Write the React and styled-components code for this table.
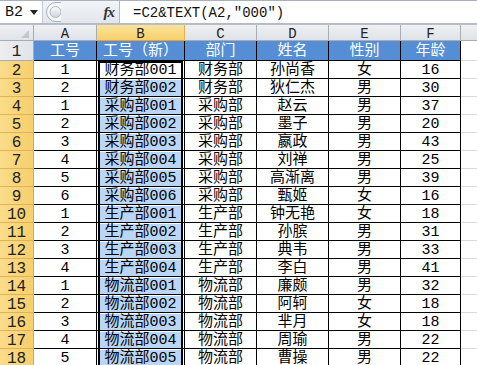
import React from "react";
import styled, { createGlobalStyle } from "styled-components";

const Global = createGlobalStyle`
  html, body { margin: 0; padding: 0; background: #fff; }
  body { font-family: "Liberation Mono", "Noto Sans CJK SC", monospace; }
  * { box-sizing: border-box; }
`;

const COLS = "34px 63px 88px 72px 72px 72px 60px 1fr";

const Page = styled.div`
  width: 477px;
  height: 365px;
  overflow: hidden;
  background: #fff;
  display: flex;
  flex-direction: column;
`;

const FormulaBar = styled.div`
  height: 24px;
  display: flex;
  border-top: 1px solid #aab1ba;
  border-bottom: 1px solid #b4bbc4;
  background: linear-gradient(#f2f4f7, #e2e6ec);
`;

const NameBox = styled.div`
  width: 43px;
  background: #fff;
  display: flex;
  align-items: center;
  justify-content: space-between;
  padding: 1px 4px 0 5px;
  font-size: 15px;
  color: #111;
  border-right: 1px solid #c4cad2;
`;

const Handle = styled.div`
  width: 76px;
  display: flex;
  align-items: center;
  justify-content: space-between;
  padding: 0 5px 0 2px;
`;

const Fx = styled.span`
  font-family: "Liberation Serif", serif;
  font-style: italic;
  font-weight: bold;
  font-size: 15px;
  color: #333;
  letter-spacing: -1px;
`;

const FormulaInput = styled.div`
  flex: 1;
  background: #fff;
  border-left: 1px solid #b4bbc4;
  display: flex;
  align-items: center;
  padding: 1px 0 0 13px;
  font-size: 14px;
  color: #111;
  white-space: nowrap;
`;

const Gap = styled.div`
  height: 4px;
  background: #e6e8eb;
  border-bottom: 1px solid #b9bec5;
`;

const Row = styled.div`
  display: grid;
  grid-template-columns: ${COLS};
  height: ${(p) => p.$h}px;
  flex-shrink: 0;
`;

const Center = styled.div`
  display: flex;
  align-items: center;
  justify-content: center;
  white-space: nowrap;
  overflow: hidden;
  line-height: 1;
`;

const Corner = styled(Center)`
  position: relative;
  background: linear-gradient(#eef0f3, #e1e4e8);
  border-right: 1px solid #a7adb5;
  border-bottom: 1px solid #a7adb5;
`;

const CornerMark = styled.svg`
  position: absolute;
  right: 4px;
  bottom: 2px;
`;

const ColHead = styled(Center)`
  font-size: 14px;
  color: #222;
  padding-top: 2px;
  background: ${(p) =>
    p.$sel
      ? "linear-gradient(#fbe39b, #f6cf6a)"
      : "linear-gradient(#eef0f3, #dfe2e7)"};
  border-right: 1px solid ${(p) => (p.$sel ? "#e8b24a" : "#a7adb5")};
  border-bottom: 1px solid ${(p) => (p.$sel ? "#f0a030" : "#a7adb5")};
`;

const RowHead = styled(Center)`
  font-size: 16px;
  color: #222;
  padding-top: 2px;
  background: ${(p) =>
    p.$sel
      ? "linear-gradient(90deg, #fbdc8a, #f7cf6c)"
      : "linear-gradient(90deg, #eceef1, #e1e4e8)"};
  border-right: 1px solid ${(p) => (p.$sel ? "#e4a43c" : "#a7adb5")};
  border-bottom: 1px solid ${(p) => (p.$sel ? "#dfb458" : "#a7adb5")};
`;

const Cell = styled(Center)`
  font-size: 15px;
  padding-top: 2px;
  color: ${(p) => (p.$kind === "head" ? "#fff" : "#000")};
  background: ${(p) =>
    p.$kind === "head" ? "#558ed5" : p.$kind === "sel" ? "#bad6f7" : "#fff"};
  border-right: 1px solid #000;
  border-bottom: 1px solid #000;
  box-shadow: ${(p) =>
    p.$frame
      ? `inset 1px 0 0 #fff, inset 3px 0 0 #000, inset -1px 0 0 #fff, inset -3px 0 0 #000${
          p.$kind === "active" ? ", inset 0 2px 0 #000" : ", inset 0 1px 0 #fff"
        }`
      : "none"};
`;

const Blank = styled.div`
  background: #fff;
  border-bottom: 1px solid #d6dae0;
`;

const HeadBlank = styled.div`
  background: linear-gradient(#eef0f3, #dfe2e7);
  border-bottom: 1px solid #a7adb5;
`;

const data = [
  ["1", "财务部001", "财务部", "孙尚香", "女", "16"],
  ["2", "财务部002", "财务部", "狄仁杰", "男", "30"],
  ["1", "采购部001", "采购部", "赵云", "男", "37"],
  ["2", "采购部002", "采购部", "墨子", "男", "20"],
  ["3", "采购部003", "采购部", "嬴政", "男", "43"],
  ["4", "采购部004", "采购部", "刘禅", "男", "25"],
  ["5", "采购部005", "采购部", "高渐离", "男", "39"],
  ["6", "采购部006", "采购部", "甄姬", "女", "16"],
  ["1", "生产部001", "生产部", "钟无艳", "女", "18"],
  ["2", "生产部002", "生产部", "孙膑", "男", "31"],
  ["3", "生产部003", "生产部", "典韦", "男", "33"],
  ["4", "生产部004", "生产部", "李白", "男", "41"],
  ["1", "物流部001", "物流部", "廉颇", "男", "32"],
  ["2", "物流部002", "物流部", "阿轲", "女", "18"],
  ["3", "物流部003", "物流部", "芈月", "女", "18"],
  ["4", "物流部004", "物流部", "周瑜", "男", "22"],
  ["5", "物流部005", "物流部", "曹操", "男", "22"],
];

const headers = ["工号", "工号（新）", "部门", "姓名", "性别", "年龄"];
const letters = ["A", "B", "C", "D", "E", "F"];

export default function App() {
  return (
    <Page>
      <Global />
      <FormulaBar>
        <NameBox>
          <span>B2</span>
          <svg width="8" height="5" viewBox="0 0 8 5">
            <path d="M0 0 H8 L4 5 Z" fill="#222" />
          </svg>
        </NameBox>
        <Handle>
          <svg width="16" height="22" viewBox="0 0 16 22">
            <defs>
              <linearGradient id="kn" x1="0" y1="0" x2="0" y2="1">
                <stop offset="0" stopColor="#fafbfc" />
                <stop offset="1" stopColor="#cfd4da" />
              </linearGradient>
            </defs>
            <path d="M16 1.5 H11 A9.5 9.5 0 0 0 11 20.5 H16" fill="#f4f6f8" stroke="#a9b0b9" />
            <circle cx="10.5" cy="11" r="5.5" fill="url(#kn)" stroke="#b2b8c0" />
          </svg>
          <Fx>fx</Fx>
        </Handle>
        <FormulaInput>=C2&amp;TEXT(A2,″000″)</FormulaInput>
      </FormulaBar>
      <Gap />
      <Row $h={16}>
        <Corner>
          <CornerMark width="8" height="8" viewBox="0 0 8 8">
            <path d="M8 0 V8 H0 Z" fill="#c3c8ce" />
          </CornerMark>
        </Corner>
        {letters.map((l) => (
          <ColHead key={l} $sel={l === "B"}>
            {l}
          </ColHead>
        ))}
        <HeadBlank />
      </Row>
      <Row $h={20}>
        <RowHead>1</RowHead>
        {headers.map((h) => (
          <Cell key={h} $kind="head">
            {h}
          </Cell>
        ))}
        <Blank />
      </Row>
      {data.map((r, i) => (
        <Row key={i} $h={18}>
          <RowHead $sel>{i + 2}</RowHead>
          {r.map((v, j) => (
            <Cell
              key={j}
              $frame={j === 1}
              $kind={j === 1 ? (i === 0 ? "active" : "sel") : "plain"}
            >
              {v}
            </Cell>
          ))}
          <Blank />
        </Row>
      ))}
    </Page>
  );
}
